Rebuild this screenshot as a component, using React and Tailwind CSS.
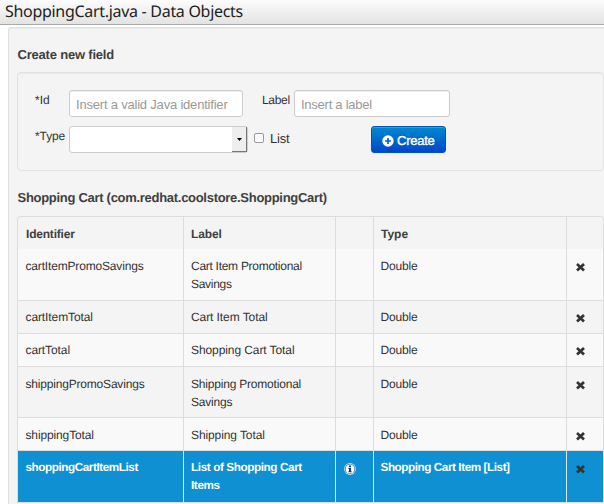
import React from "react";

const rows = [
  { id: "cartItemPromoSavings", idTrack: "tracking-[-0.17px]", label: ["Cart Item Promotional", "Savings"], labelTrack: "tracking-[-0.28px]", type: "Double", h: "h-[52px]", bg: "bg-[#f9f9f9]", pad: "pt-[8px]" },
  { id: "cartItemTotal", idTrack: "tracking-[-0.1px]", label: ["Cart Item Total"], labelTrack: "tracking-[-0.08px]", type: "Double", h: "h-[33px]", bg: "bg-[#f4f4f4]", pad: "pt-[7px]" },
  { id: "cartTotal", idTrack: "tracking-[-0.1px]", label: ["Shopping Cart Total"], labelTrack: "tracking-[-0.09px]", type: "Double", h: "h-[33px]", bg: "bg-[#f9f9f9]", pad: "pt-[7px]" },
  { id: "shippingPromoSavings", idTrack: "tracking-[-0.19px]", label: ["Shipping Promotional", "Savings"], labelTrack: "tracking-[-0.2px]", type: "Double", h: "h-[51px]", bg: "bg-[#f4f4f4]", pad: "pt-[8px]" },
  { id: "shippingTotal", idTrack: "tracking-[-0.13px]", label: ["Shipping Total"], labelTrack: "tracking-[-0.1px]", type: "Double", h: "h-[33px]", bg: "bg-[#f9f9f9]", pad: "pt-[8px]" },
  { id: "shoppingCartItemList", idTrack: "tracking-[-0.42px]", label: ["List of Shopping Cart", "Items"], labelTrack: "tracking-[-0.38px]", type: "Shopping Cart Item [List]", h: "h-[52px]", bg: "bg-[#0f90d3]", pad: "pt-[8px]", selected: true },
];

const columns = "grid grid-cols-[166px_152px_38px_193px_36px]";

function RemoveIcon() {
  return (
    <svg width="9" height="9" viewBox="0 0 9 9" className="mt-[6px] block">
      <path d="M2 1.9 7 6.5M7 1.9 2 6.5" stroke="#333" strokeWidth="2.7" strokeLinecap="square" />
    </svg>
  );
}

function InfoIcon() {
  return (
    <svg width="12" height="12" viewBox="0 0 12 12" className="mt-[4px] ml-[1px] block">
      <circle cx="6" cy="6" r="5.9" fill="#c3dcf0" />
      <circle cx="6" cy="6" r="5.1" fill="#20609f" />
      <circle cx="6" cy="6" r="4.5" fill="#fff" />
      <path d="M5 2.4h2v1.5H5zM4.4 4.8H7v3.4h.7v1.1H4.4V8.2H5V5.9h-.6z" fill="#123a68" />
    </svg>
  );
}

function Row({ row }) {
  const line = row.selected ? "border-[#d5eaf6]" : "border-[#dddddd]";
  const cell = `border-r ${row.pad} ${line}`;
  return (
    <div className={`${columns} ${row.h} ${row.bg} border-b border-[#dddddd] leading-[18px] ${row.selected ? "text-[11.7px] font-bold text-white" : ""}`}>
      <div className={`${cell} pl-[7.5px] ${row.idTrack}`}>{row.id}</div>
      <div className={`${cell} pl-[7px] ${row.labelTrack}`}>
        {row.label.map((text) => (
          <div key={text} className="whitespace-nowrap">{text}</div>
        ))}
      </div>
      <div className={`${cell} pl-[7px]`}>{row.selected && <InfoIcon />}</div>
      <div className={`${cell} pl-[6.5px] ${row.selected ? "tracking-[-0.42px]" : "tracking-[-0.15px]"}`}>{row.type}</div>
      <div className={`pl-[9px] ${row.pad}`}><RemoveIcon /></div>
    </div>
  );
}

export default function App() {
  return (
    <div className="h-[504px] w-[604px] overflow-hidden bg-white font-['Liberation_Sans',Arial,sans-serif] text-[12px] text-[#333] [text-rendering:geometricPrecision]">
      <header className="h-[25px] border-b border-[#aaa] bg-linear-to-b from-[#fcfcfc] to-[#e3e3e3] pl-[5px]">
        <h1 className="whitespace-nowrap font-['Noto_Sans',sans-serif] text-[16px] leading-[23px] tracking-[-0.3px] text-[#222]">ShoppingCart.java - Data Objects</h1>
      </header>
      <main className="mt-[2px] ml-[8px] h-[490px] w-[600px] rounded-tl-[3px] border border-[#e1e1e1] bg-[#f4f4f4] pl-[8px] shadow-[inset_0_1px_1px_rgba(0,0,0,0.05)]">
        <h2 className="pt-[17px] pl-[0.5px] text-[13px] leading-[20px] font-bold tracking-[-0.2px] text-[#404040]">Create new field</h2>

        <section className="mt-[7px] h-[99px] w-[587px] rounded-[4px] border border-[#e1e1e1] pt-[17px] pl-[17px] shadow-[inset_0_1px_1px_rgba(0,0,0,0.05)]">
          <div className="flex h-[36px] items-start">
            <label className="w-[34px] pt-[1px] leading-[18px]">*Id</label>
            <input className="h-[27px] w-[174px] rounded-[3px] border border-[#ccc] bg-white px-[6px] pt-[2px] text-[13px] tracking-[-0.2px] shadow-[inset_0_1px_1px_rgba(0,0,0,0.075)] placeholder:text-[#999]" placeholder="Insert a valid Java identifier" />
            <label className="ml-[19px] w-[32px] pt-[1px] leading-[18px] tracking-[-0.3px]">Label</label>
            <input className="h-[27px] w-[156px] rounded-[3px] border border-[#ccc] bg-white px-[6px] pt-[2px] text-[13px] tracking-[-0.25px] shadow-[inset_0_1px_1px_rgba(0,0,0,0.075)] placeholder:text-[#999]" placeholder="Insert a label" />
          </div>
          <div className="flex h-[27px] items-start">
            <label className="w-[34px] pt-[1px] leading-[18px] tracking-[-0.1px]">*Type</label>
            <div className="flex h-[27px] w-[179px] justify-end rounded-[3px] border border-[#ccc] bg-white">
              <div className="flex h-[25px] w-[15px] items-center justify-center border-r border-b border-[#777] bg-[#eee]">
                <svg width="5" height="3" viewBox="0 0 5 3" className="mt-[1px]"><path d="M0 0h5L2.5 3z" fill="#000" /></svg>
              </div>
            </div>
            <span className="mt-[7px] ml-[6px] h-[10px] w-[10px] rounded-[2px] border border-[#999] bg-white" />
            <span className="ml-[6px] w-[101px] pt-[3px] text-[13px] leading-[20px] tracking-[-0.2px]">List</span>
            <button className="flex h-[27px] w-[75px] items-center gap-[3px] rounded-[3px] border border-[#0055b5] bg-linear-to-b from-[#0088cc] to-[#0044cc] pt-[2px] pl-[10px] text-[13px] text-white shadow-[inset_0_1px_0_rgba(255,255,255,0.2),0_1px_2px_rgba(0,0,0,0.05)] [text-shadow:0_-1px_0_rgba(0,0,0,0.25)]">
              <svg width="12" height="12" viewBox="0 0 12 12">
                <circle cx="6" cy="6" r="5.7" fill="#fff" />
                <path d="M6 3v6M3 6h6" stroke="#0062c8" strokeWidth="1.7" />
              </svg>
              <span className="tracking-[-0.25px] [-webkit-text-stroke:0.4px_white]">Create</span>
            </button>
          </div>
        </section>

        <h2 className="mt-[17px] pl-[0.5px] text-[13px] leading-[20px] font-bold tracking-[-0.29px] text-[#404040]">Shopping Cart (com.redhat.coolstore.ShoppingCart)</h2>

        <section className="mt-[8px] w-[587px] overflow-hidden rounded-t-[4px] border-x border-t border-[#dddddd]">
          <div className={`${columns} h-[32px] font-bold leading-[18px] text-[#404040]`}>
            <div className="border-r border-[#dddddd] pt-[8px] pl-[8px] tracking-[-0.2px]">Identifier</div>
            <div className="border-r border-[#dddddd] pt-[8px] pl-[7px] tracking-[-0.1px]">Label</div>
            <div className="border-r border-[#dddddd]" />
            <div className="border-r border-[#dddddd] pt-[8px] pl-[7px]">Type</div>
            <div />
          </div>
          {rows.map((row) => (
            <Row key={row.id} row={row} />
          ))}
        </section>
      </main>
    </div>
  );
}
